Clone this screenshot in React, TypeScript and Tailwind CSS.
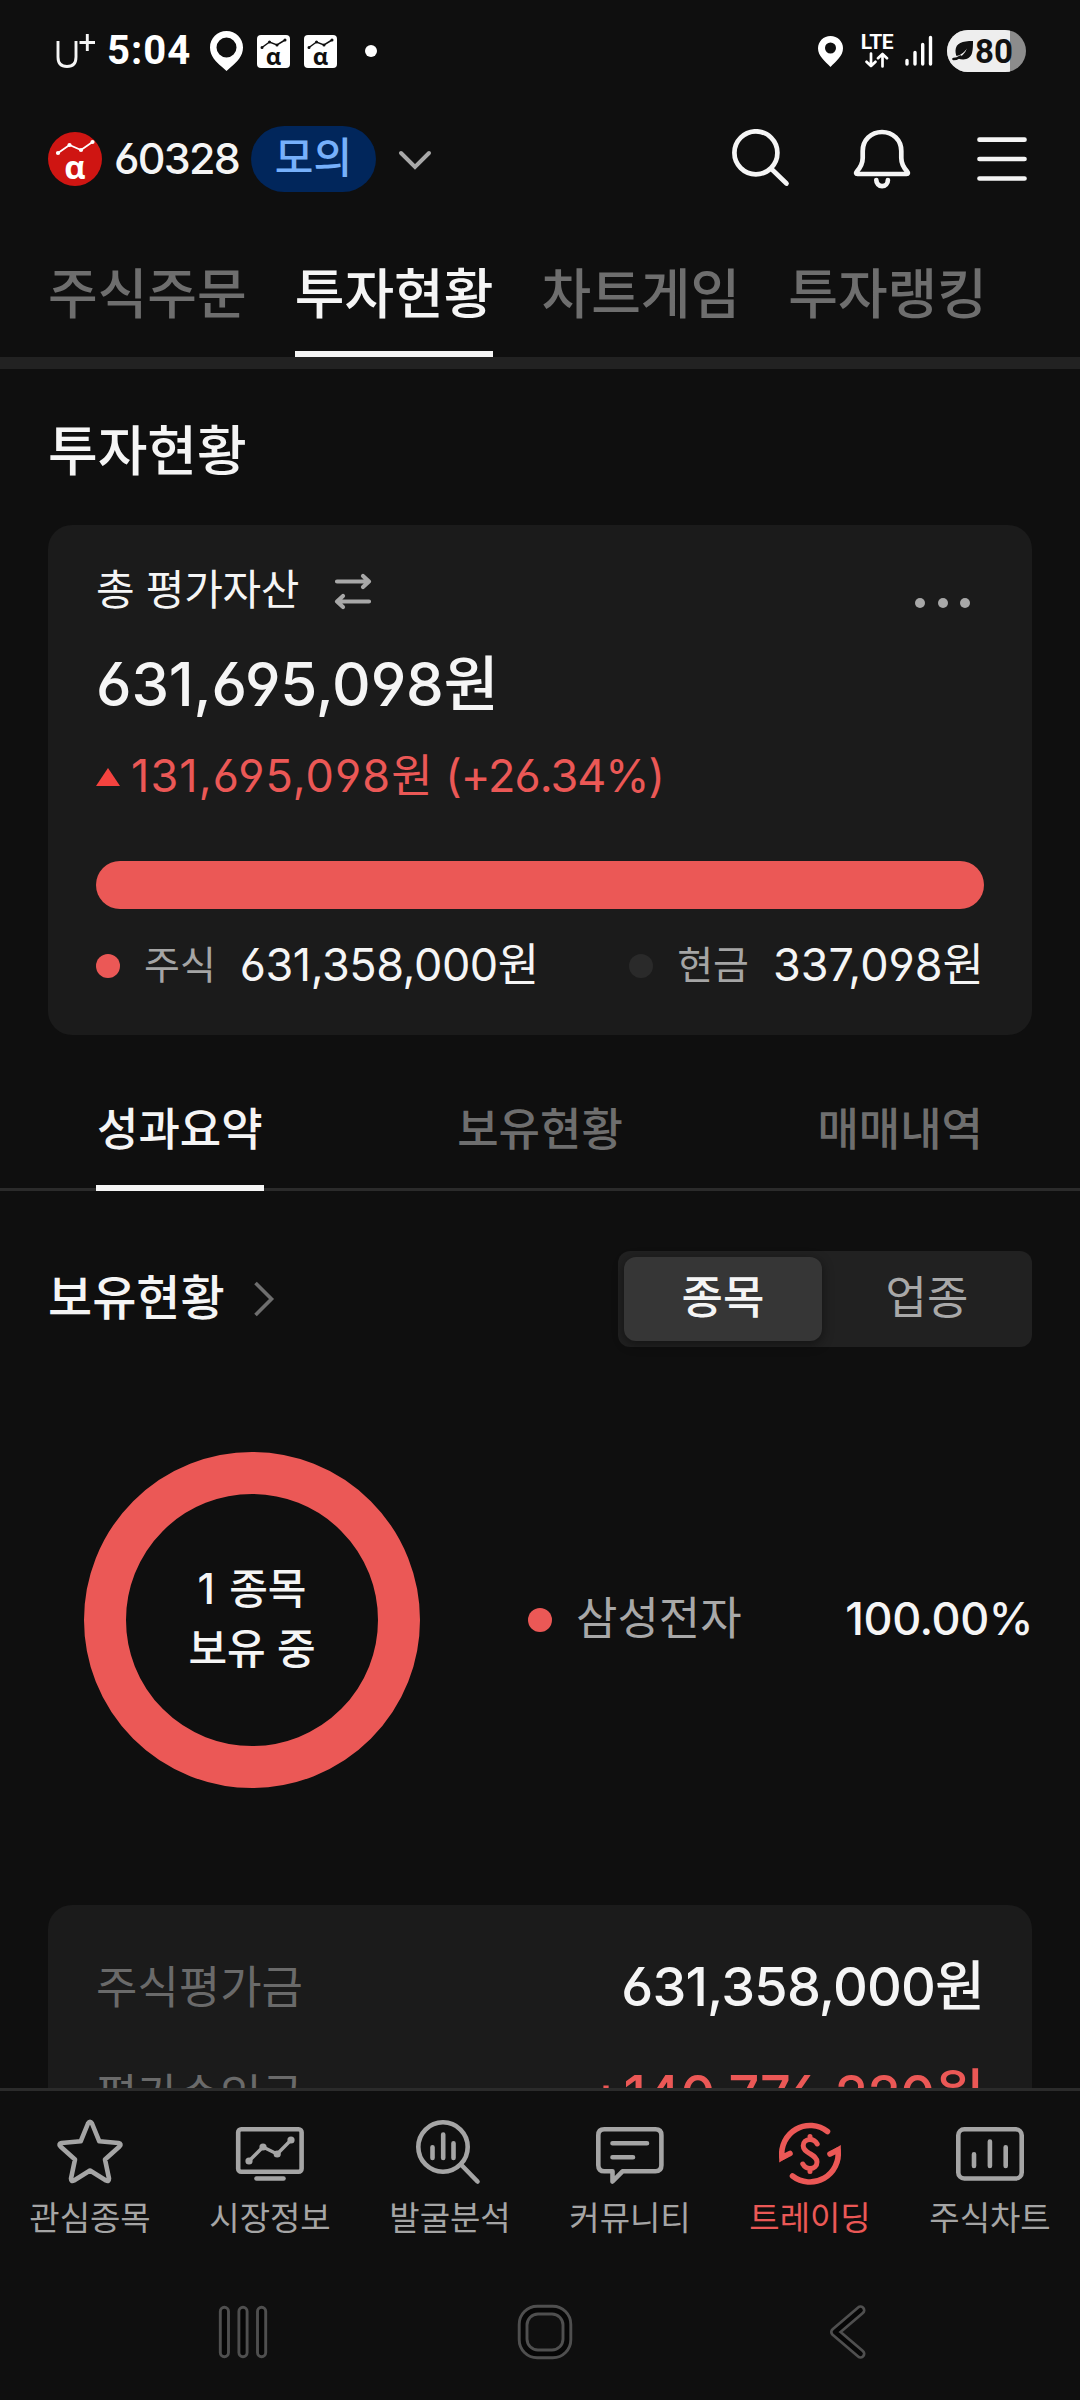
import type { ReactNode } from 'react'
import clsx from 'clsx'

const mainTabs = ['주식주문', '투자현황', '차트게임', '투자랭킹']
const subTabs = ['성과요약', '보유현황', '매매내역']

function AlphaBadge() {
  return (
    <span className="relative flex h-[33px] w-[33px] items-end justify-center rounded-[4px] bg-white">
      <svg className="absolute inset-0" width="33" height="33" viewBox="0 0 33 33" fill="none" stroke="#0f0f0f">
        <path d="M5 12.5 12.5 7 20 10 28 5" strokeWidth="1.5" />
        <path d="M5 12.5h.01M12.5 7h.01M20 10h.01M28 5h.01" strokeWidth="3" strokeLinecap="round" />
      </svg>
      <span className="font-['Open_Sans'] text-[24px] leading-[24px] font-bold text-[#0f0f0f]">α</span>
    </span>
  )
}

function StatusBar() {
  return (
    <div className="flex h-[102px] items-center justify-between pr-[54px] pl-[55px] text-white">
      <div className="flex items-center">
        <svg width="42" height="38" viewBox="0 0 42 38" fill="none" stroke="#f5f5f5">
          <path d="M3 9v16c0 6 3 9.500 9 9.500s9-3.500 9-9.500V9" strokeWidth="2.900" />
          <path d="M24.500 10.500H40M32.300 2v17" strokeWidth="2.900" />
        </svg>
        <span className="ml-[10px] w-[92px] font-['Roboto'] text-[40px] leading-none font-bold tracking-[1px]">5:04</span>
        <svg className="ml-[11px]" width="33" height="40" viewBox="0 0 33 40">
          <path
            fill="#fff"
            fillRule="evenodd"
            d="M16.500 0C7.400 0 0 7.200 0 16.500 0 25 6 31 11.500 35.500L16.500 40l5-4.500C27 31 33 25 33 16.500 33 7.200 25.600 0 16.500 0Zm0 6.500a10 10 0 1 1 0 20 10 10 0 0 1 0-20Z"
          />
        </svg>
        <div className="ml-[14px] flex gap-[14px]">
          <AlphaBadge />
          <AlphaBadge />
        </div>
        <span className="ml-[28px] h-3 w-3 rounded-full bg-white" />
      </div>

      <div className="flex items-center">
        <svg width="25" height="31" viewBox="0 0 25 31">
          <path
            fill="#fff"
            fillRule="evenodd"
            d="M12.500 0C5.500 0 0 5.500 0 12.200 0 20 7 25 12.500 31 18 25 25 20 25 12.200 25 5.500 19.500 0 12.500 0Zm0 6.500a5.500 5.500 0 1 1 0 11 5.500 5.500 0 0 1 0-11Z"
          />
        </svg>
        <div className="ml-[17px] flex w-[34px] flex-col items-center">
          <span className="font-['Roboto'] text-[21px] leading-[17px] font-bold tracking-[-0.5px]">LTE</span>
          <svg className="mt-px" width="24" height="16" viewBox="0 0 24 16" fill="none" stroke="#fff" strokeWidth="2.700" strokeLinecap="round" strokeLinejoin="round">
            <path d="M6 1.500v12.500M1.500 9.800 6 14l4.500-4.200M17.500 14.500V2M13 6.200 17.500 2 22 6.200" />
          </svg>
        </div>
        <svg className="ml-[11px]" width="28" height="32" viewBox="0 0 28 32" fill="none" stroke="#fff" strokeWidth="3.400" strokeLinecap="round">
          <path d="M2 25.500V29M10 17.500V29M17.700 9.500V29M25.500 2.500V29" />
        </svg>
        <div className="relative ml-[14px] flex h-[42px] w-[79px] items-center overflow-hidden rounded-full bg-[#8c8c8c]">
          <div className="absolute inset-y-0 left-0 w-[63px] bg-[#eee]" />
          <svg className="relative ml-[5px]" width="22" height="20" viewBox="0 0 22 20">
            <path fill="#111" d="M21 0C10 0 4 2 3.500 9.500c0 3 .5 4 1 5.500C10 14 13 10 15 7.500c-2 5-6 8.500-9 10 7 2.500 12.500 0 14-5.500C21 8 21 4 21 0Z" />
            <path fill="none" stroke="#111" strokeWidth="2.600" strokeLinecap="round" d="M1.500 18c3 0 5-1 7-2.500" />
          </svg>
          <span className="relative ml-px font-['Roboto'] text-[33px] leading-none font-bold text-[#111]">80</span>
        </div>
      </div>
    </div>
  )
}

function Header() {
  return (
    <header className="flex h-[114px] items-center justify-between px-12">
      <div className="flex items-center">
        <span className="relative flex h-[54px] w-[54px] items-end justify-center rounded-full bg-[#cf1512]">
          <svg className="absolute inset-0" width="54" height="54" viewBox="0 0 54 54" fill="none" stroke="#fff">
            <path d="M10 21 21.500 13 33 18 44.500 10" strokeWidth="1.800" />
            <path d="M10 21h.01M21.500 13h.01M33 18h.01M44.500 10h.01" strokeWidth="4.200" strokeLinecap="round" />
          </svg>
          <span className="mb-[3px] font-['Open_Sans'] text-[33px] leading-[33px] font-bold text-white">α</span>
        </span>
        <span className="ml-[12px] w-[126px] pb-[2px] text-[43px] leading-none font-medium tracking-[-0.04em]">60328</span>
        <span className="ml-[11px] flex h-[66px] w-[125px] items-center justify-center rounded-full bg-[#01265b] pb-[3px] text-[42px] leading-none font-medium text-[#76b0fb]">
          모의
        </span>
        <svg className="ml-[22px] mt-1" width="34" height="22" viewBox="0 0 34 22" fill="none" stroke="#a8a8a8" strokeWidth="4">
          <path d="M3 3 17 17 31 3" strokeLinecap="round" />
        </svg>
      </div>
      <div className="-mr-[2px] flex items-center">
        <svg width="60" height="60" viewBox="0 0 60 60" fill="none" stroke="#f5f5f5" strokeWidth="4.700" strokeLinecap="round">
          <circle cx="25.900" cy="23.800" r="21.500" />
          <path d="M41.500 40 56.500 54.500" />
        </svg>
        <svg className="ml-[62px]" width="60" height="60" viewBox="0 0 60 60" fill="none" stroke="#f5f5f5" strokeWidth="4.700" strokeLinecap="round" strokeLinejoin="round">
          <path d="M30 3C19 3 10.700 11 10.700 22v7c0 6-2.200 9.500-5.900 13.500C3.600 43.800 4 45 5.500 45h49c1.500 0 1.900-1.200.7-2.500-3.700-4-5.900-7.500-5.900-13.500v-7C49.300 11 41 3 30 3Z" />
          <path d="M24.300 51a5.800 6.200 0 0 0 11.600 0" />
        </svg>
        <svg className="ml-[62px]" width="60" height="60" viewBox="0 0 60 60" fill="none" stroke="#f5f5f5" strokeWidth="4.700" strokeLinecap="round">
          <path d="M5.500 10.700H50.500M5.500 30H50.500M5.500 49.500H50.500" />
        </svg>
      </div>
    </header>
  )
}

function Dot({ className }: { className: string }) {
  return <span className={clsx('h-6 w-6 shrink-0 rounded-full', className)} />
}

function AssetCard() {
  return (
    <section className="mx-12 mt-[42px] h-[510px] rounded-[24px] bg-[#1b1b1b] px-12 pt-[34px]">
      <div className="flex h-[60px] items-center">
        <span className="pt-[2px] text-[42px] leading-none tracking-[-0.3px]">총 평가자산</span>
        <svg className="mt-[5px] ml-[35px]" width="38" height="38" viewBox="0 0 38 38" fill="none" stroke="#a8a8a8" strokeWidth="4.200" strokeLinecap="round" strokeLinejoin="round">
          <path d="M3 8.500H35M29 3l6 5.500-6 5.500M35 28.500H3M9 23l-6 5.500L9 34" />
        </svg>
        <div className="mt-[28px] mr-[14px] ml-auto flex gap-[12.5px]">
          <span className="h-[10px] w-[10px] rounded-full bg-[#a8a8a8]" />
          <span className="h-[10px] w-[10px] rounded-full bg-[#a8a8a8]" />
          <span className="h-[10px] w-[10px] rounded-full bg-[#a8a8a8]" />
        </div>
      </div>
      <div className="mt-[23px] flex h-[84px] items-center text-[60px] leading-none font-medium tracking-[-0.003em]">
        631,695,098원
      </div>
      <div className="mt-[7px] flex h-[84px] items-center text-[#eb5856]">
        <svg className="mt-1" width="24" height="18" viewBox="0 0 24 18">
          <path fill="#f5433f" d="M12 0 24 18H0Z" />
        </svg>
        <span className="ml-[11px] text-[45px] leading-none tracking-[0.024em]">
          131,695,098원<span className="tracking-[-0.022em]"> (+26.34%)</span>
        </span>
      </div>
      <div className="mt-[44px] h-12 rounded-full bg-[#eb5856]" />
      <div className="mt-[27px] flex h-[60px] items-center">
        <Dot className="bg-[#eb5856]" />
        <span className="ml-6 pb-[3px] text-[39px] leading-none text-[#a5a5a5]">주식</span>
        <span className="ml-6 pb-[3px] text-[45px] leading-none tracking-[-0.01em]">631,358,000원</span>
        <Dot className="ml-auto bg-[#2a2a2a]" />
        <span className="ml-6 pb-[3px] text-[39px] leading-none text-[#a5a5a5]">현금</span>
        <span className="ml-6 pb-[3px] text-[45px] leading-none">337,098원</span>
      </div>
    </section>
  )
}

function Holdings() {
  return (
    <section>
      <div className="mt-[60px] flex h-24 items-center justify-between px-12">
        <div className="flex items-center">
          <h2 className="pb-[3px] text-[48px] leading-none font-medium">보유현황</h2>
          <svg className="ml-[28px]" width="22" height="36" viewBox="0 0 22 36" fill="none" stroke="#6e6e6e" strokeWidth="3.600">
            <path d="M2.500 2 18.500 18 2.500 34" />
          </svg>
        </div>
        <div className="flex h-24 w-[414px] rounded-[12px] bg-[#212121] p-[6px] text-[45px] leading-none">
          <div className="flex w-[198px] items-center justify-center rounded-[12px] bg-[#363636] pb-[3px] font-medium shadow-[0_3px_12px_rgba(0,0,0,0.45)]">
            종목
          </div>
          <div className="flex flex-1 items-center justify-center pb-[3px] pl-[6px] text-[#a8a8a8]">업종</div>
        </div>
      </div>

      <div className="mt-[105px] flex h-[336px] items-center pr-12 pl-[84px]">
        <div className="flex h-[336px] w-[336px] flex-col items-center justify-center rounded-full border-[42px] border-[#eb5856] pb-[2px] text-[42px] leading-[60px] font-medium">
          <span className="[word-spacing:3px]">1 종목</span>
          <span>보유 중</span>
        </div>
        <Dot className="ml-[108px] bg-[#eb5856]" />
        <span className="ml-6 pb-[3px] text-[45px] leading-none text-[#a8a8a8]">삼성전자</span>
        <span className="-mr-px ml-auto pb-[3px] text-[45px] leading-none font-medium tracking-[-0.01em]">100.00%</span>
      </div>
    </section>
  )
}

function SummaryRow({ label, value, className }: { label: string; value: string; className?: string }) {
  return (
    <div className="flex h-[108px] shrink-0 items-center justify-between">
      <span className="text-[45px] leading-none text-[#6a6a6a]">{label}</span>
      <span className={clsx('text-[54px] leading-none font-medium', className)}>{value}</span>
    </div>
  )
}

function NavItem({ label, active, children }: { label: string; active?: boolean; children: ReactNode }) {
  return (
    <div className={clsx('flex flex-1 flex-col items-center pt-6', active ? 'text-[#eb5856]' : 'text-[#a5a5a5]')}>
      <svg width="72" height="72" viewBox="0 0 72 72" fill="none" stroke="currentColor" strokeWidth="4.600" strokeLinecap="round" strokeLinejoin="round">
        {children}
      </svg>
      <span className="mt-[13px] text-[33px] leading-[36px]">{label}</span>
    </div>
  )
}

function BottomNav() {
  return (
    <nav className="flex h-[162px] shrink-0 border-t-[3px] border-[#2b2b2b]">
      <NavItem label="관심종목">
        <path d="M34 8.500Q36 5 38 8.500L45.300 26.300 64.500 28Q68 28.800 65.500 31.500L51 44.500 55 63.500Q55 67 52 65.500L36 55.500 20 65.500Q17 67 17 63.500L21 44.500 6.500 31.500Q4 28.800 7.500 28L26.700 26.300Z" />
      </NavItem>
      <NavItem label="시장정보">
        <rect x="4.200" y="14.300" width="63.400" height="42.400" rx="3" />
        <path d="M22.500 63.500H49.500" />
        <path d="M15 46 29 32 43.200 39 57 25" strokeWidth="3.400" />
        <path d="M15 46h.01M29 32h.01M43.200 39h.01M57 25h.01" strokeWidth="7.200" />
      </NavItem>
      <NavItem label="발굴분석">
        <circle cx="29" cy="32" r="24.700" />
        <path d="M47.400 50 63.500 66.500M18.500 32.200V43M29.200 19.500V43M39.500 28.200V43" />
      </NavItem>
      <NavItem label="커뮤니티">
        <path d="M10.300 14.300H61.400Q67.400 14.300 67.400 20.300V50.300Q67.400 56.300 61.400 56.300H28.500L18.500 66.500V56.300H10.300Q4.300 56.300 4.300 50.300V20.300Q4.300 14.300 10.300 14.300Z" />
        <path d="M18.500 28.300H53M18.500 42.300H39" />
      </NavItem>
      <NavItem label="트레이딩" active>
        <path d="M53.500 16.500A28.300 28.300 0 0 0 8 42.500L16 38.500" strokeWidth="5.600" />
        <path d="M18.500 61A28.300 28.300 0 0 0 64 35L56 39" strokeWidth="5.600" />
        <path d="M5.200 36V47.500L15 41.500ZM66.800 41.500V30L57 36Z" fill="currentColor" stroke="none" />
        <path d="M43.200 29C41.500 26 39 24.500 36 24.500c-4.200 0-6.800 2.800-6.800 6.200 0 4 3.300 5.800 6.800 8 3.800 2.300 7 4.200 7 8.300 0 3.700-2.800 6.500-7 6.500-3 0-5.600-1.800-7.200-4.500M36 21.500v3M36 53.500v3" strokeWidth="5" />
      </NavItem>
      <NavItem label="주식차트">
        <rect x="4.300" y="14.300" width="63.400" height="49.200" rx="6" />
        <path d="M20 39.200V51M35.900 26.500V51M51.700 32.200V51" />
      </NavItem>
    </nav>
  )
}

function SystemNav() {
  return (
    <div className="flex h-[150px] shrink-0 items-center pt-[14px] pl-[217px]">
      <svg width="52" height="56" viewBox="0 0 52 56" fill="#060606" stroke="#4f4f4f" strokeWidth="2.900">
        <rect x="3.300" y="3.300" width="8.200" height="49.400" rx="4.100" />
        <rect x="21.900" y="3.300" width="8.200" height="49.400" rx="4.100" />
        <rect x="40.500" y="3.300" width="8.200" height="49.400" rx="4.100" />
      </svg>
      <svg className="ml-[248px]" width="56" height="56" viewBox="0 0 56 56" stroke="#4f4f4f" strokeWidth="2.900">
        <rect x="2.200" y="2.200" width="51.600" height="51.600" rx="18" fill="#060606" />
        <rect x="10" y="10" width="36" height="36" rx="11" fill="#0f0f0f" />
      </svg>
      <svg className="ml-[256px]" width="40" height="56" viewBox="0 0 40 56" fill="none" strokeLinecap="round" strokeLinejoin="round">
        <path d="M31.500 6.300 6 28 31.500 49.700" stroke="#4f4f4f" strokeWidth="10" />
        <path d="M31.500 6.300 6 28 31.500 49.700" stroke="#060606" strokeWidth="4.600" />
      </svg>
    </div>
  )
}

export default function App() {
  return (
    <div className="flex h-[2400px] w-[1080px] flex-col overflow-hidden bg-[#0f0f0f] font-['Inter','Noto_Sans_CJK_KR',sans-serif] text-[#f5f5f5] [font-feature-settings:'cv03','cv04']">
      <div className="flex min-h-0 flex-1 flex-col overflow-hidden">
        <StatusBar />
        <Header />

        <div className="flex h-[153px] shrink-0 gap-12 border-b-[12px] border-[#222] pl-12">
          {mainTabs.map((tab, i) => (
            <div
              key={tab}
              className={clsx(
                'flex items-center border-b-[6px] pt-[23px] text-[54px] leading-none font-medium',
                i === 1 ? 'border-[#f5f5f5]' : 'border-transparent text-[#6e6e6e]',
              )}>
              {tab}
            </div>
          ))}
        </div>

        <h1 className="mt-[50px] flex h-16 shrink-0 items-center px-12 pt-px text-[54px] leading-none font-medium">투자현황</h1>

        <AssetCard />

        <div className="flex h-[156px] shrink-0 justify-between px-24 shadow-[inset_0_-3px_0_#2b2b2b]">
          {subTabs.map((tab, i) => (
            <div
              key={tab}
              className={clsx(
                'flex items-center border-b-[6px] px-px pt-[38px] text-[45px] leading-none font-medium',
                i === 0 ? 'border-[#f5f5f5]' : 'border-transparent text-[#6e6e6e]',
              )}>
              {tab}
            </div>
          ))}
        </div>

        <Holdings />

        <section className="mx-12 mt-[117px] flex min-h-0 flex-1 flex-col overflow-hidden rounded-t-[24px] bg-[#1b1b1b] px-12 pt-7">
          <SummaryRow label="주식평가금" value="631,358,000원" className="tracking-[-0.015em]" />
          <SummaryRow label="평가손익금" value="+140,776,220원" className="tracking-[-0.008em] text-[#eb5856]" />
        </section>
      </div>

      <BottomNav />
      <SystemNav />
    </div>
  )
}
